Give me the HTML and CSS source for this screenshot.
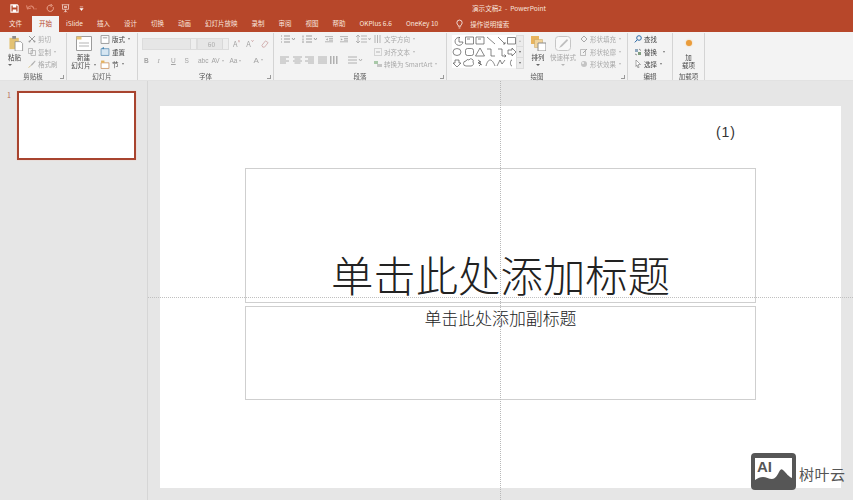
FILE: index.html
```html
<!DOCTYPE html>
<html lang="zh">
<head>
<meta charset="utf-8">
<title>演示文稿2 - PowerPoint</title>
<link rel="stylesheet" href="styles.css">
</head>
<body>
<div class="app">
  <header class="titlebar">
    <div class="qat">
      <svg class="q" viewBox="0 0 10 10"><path d="M1 1h7l1 1v7H1z" fill="none" stroke="#fff" stroke-width="1.2"/><path d="M3 1h4v3H3zM3 6h4v3H3z" fill="#fff"/></svg>
      <svg class="q dim" viewBox="0 0 14 10"><path d="M3 4c3-3 6-2 7 2M1.5 1.5l1 4 4-1" fill="none" stroke="#e08a72" stroke-width="1.2"/><path d="M11 5h2l-1 1.500z" fill="#e08a72"/></svg>
      <svg class="q dim2" viewBox="0 0 10 10"><path d="M8 3.500a3.500 3.500 0 1 1-2-2M5 0l2 1.500-2 2" fill="none" stroke="#eba893" stroke-width="1.100"/></svg>
      <svg class="q" viewBox="0 0 12 12"><path d="M1 1h10M2 1v6h8V1M6 7v4M4 11l2-2 2 2" fill="none" stroke="#f3d8d0" stroke-width="1"/><path d="M4 3h4v2H4z" fill="#f3d8d0"/></svg>
      <svg class="q tiny" viewBox="0 0 6 6"><path d="M1 1h4M1 3h4L3 5.500z" fill="#fff" stroke="#fff" stroke-width=".6"/></svg>
    </div>
    <div class="doc">演示文稿2&nbsp; -&nbsp; PowerPoint</div>
  </header>

  <nav class="tabs">
    <span class="tab first">文件</span>
    <span class="tab on">开始</span>
    <span class="tab">iSlide</span>
    <span class="tab">插入</span>
    <span class="tab">设计</span>
    <span class="tab">切换</span>
    <span class="tab">动画</span>
    <span class="tab">幻灯片放映</span>
    <span class="tab">录制</span>
    <span class="tab">审阅</span>
    <span class="tab">视图</span>
    <span class="tab">帮助</span>
    <span class="tab">OKPlus 6.6</span>
    <span class="tab">OneKey 10</span>
    <span class="search">
      <svg class="bulb" viewBox="0 0 8 11"><path d="M2.500 8V7C1.500 6 1 5.200 1 4a3 3 0 0 1 6 0c0 1.200-.5 2-1.500 3v1zM3 10h2" fill="none" stroke="#fff" stroke-width=".9"/></svg>
      操作说明搜索
    </span>
  </nav>

  <section class="ribbon">
    <div class="group g1">
      <div class="body">
        <div class="big w-paste">
          <svg class="bigicon" viewBox="0 0 16 16"><path d="M1 2h10v12H1z" fill="#e3c274"/><path d="M4 0h4v3H4z" fill="#8d8d8d"/><path d="M7 6h6l2 2v8H7z" fill="#fff" stroke="#8a8a8a" stroke-width=".8"/></svg>
          <span class="lbl">粘贴</span><span class="chev"></span>
        </div>
        <div class="col">
          <div class="row off"><svg class="si" viewBox="0 0 8 8"><path d="M1 1l5 5M7 1L2 6" stroke="#9a9a9a" fill="none"/><circle cx="1.500" cy="6.500" r="1" fill="#9a9a9a"/><circle cx="6.500" cy="6.500" r="1" fill="#9a9a9a"/></svg>剪切</div>
          <div class="row off"><svg class="si" viewBox="0 0 8 8"><path d="M.5.500h4v5h-4zM3 2.500h4.500v5H3z" fill="#f3f3f3" stroke="#a8a8a8" stroke-width=".7"/></svg>复制<span class="caret"></span></div>
          <div class="row off"><svg class="si" viewBox="0 0 8 8"><path d="M7 .5L3.500 4 2 6.500 4.500 5 7.500 1.500z" fill="#b0b0b0"/><path d="M.5 7.500l2-1.500" stroke="#d8c48c"/></svg>格式刷</div>
        </div>
      </div>
      <div class="glabel">剪贴板<i class="launch"></i></div>
    </div>

    <div class="group g2">
      <div class="body">
        <div class="big w-new">
          <svg class="bigicon" viewBox="0 0 16 15"><path d="M.5.500h15v14H.5z" fill="#fff" stroke="#9c9c9c"/><path d="M.5.500h5v3h-5z" fill="#e8c476"/><path d="M3 7h10M3 10h10" stroke="#b5b5b5"/></svg>
          <span class="lbl">新建</span><span class="lbl">幻灯片<span class="caret"></span></span>
        </div>
        <div class="col">
          <div class="row"><svg class="si" viewBox="0 0 8 8"><path d="M.5.500h7v7h-7z" fill="#fff" stroke="#888" stroke-width=".7"/><path d="M2 2h4v1H2z" fill="#aaa"/></svg>版式<span class="caret"></span></div>
          <div class="row"><svg class="si" viewBox="0 0 8 8"><path d="M.5 1.500h7v6h-7z" fill="#d6e6f2" stroke="#5d8fb5" stroke-width=".7"/><path d="M1 1l2-1v2z" fill="#3d7fae"/></svg>重置</div>
          <div class="row"><svg class="si" viewBox="0 0 8 8"><path d="M.5 2.500h7v5h-7z" fill="#fff" stroke="#c98f5c" stroke-width=".7"/><path d="M.5.500h3v2h-3z" fill="#e5b25c"/></svg>节<span class="caret"></span></div>
        </div>
      </div>
      <div class="glabel">幻灯片</div>
    </div>

    <div class="group g3">
      <div class="body stack">
        <div class="fontrow">
          <span class="fbox name"><b class="spin"></b></span>
          <span class="fbox size">60<b class="spin"></b></span>
          <span class="tool a1">A<sup>^</sup></span>
          <span class="tool a2">A<sup>ˇ</sup></span>
          <svg class="clr" viewBox="0 0 9 9"><path d="M1 6l4-5 3 2-4 5H2z" fill="none" stroke="#c79a9a" stroke-width=".8"/></svg>
        </div>
        <div class="fmtrow">
          <b>B</b><i>I</i><u>U</u><span>S</span><span class="abc">abc</span><span class="av">AV<em></em></span><span class="aa">Aa<em></em></span><span class="ac">A<em></em></span>
        </div>
      </div>
      <div class="glabel">字体<i class="launch"></i></div>
    </div>

    <div class="group g4">
      <div class="body">
        <div class="paras">
          <div class="prow">
            <svg class="pi w15" viewBox="0 0 15 8"><path d="M1 1h1M1 4h1M1 7h1M4 1h6M4 4h6M4 7h6M12 3l1.500 2L15 3" stroke="#9d9d9d" fill="none"/></svg>
            <svg class="pi w15" viewBox="0 0 15 8"><path d="M1 .5v2M1 3.500v2M1 6v2M4 1h6M4 4h6M4 7h6M12 3l1.500 2L15 3" stroke="#9d9d9d" fill="none"/></svg>
            <svg class="pi w11 gapl" viewBox="0 0 10 8"><path d="M0 1h10M5 3.500h5M5 5.500h5M0 7.500h10" stroke="#a5a5a5"/><path d="M3.500 3v3L1 4.500z" fill="#a5a5a5"/></svg>
            <svg class="pi w11" viewBox="0 0 10 8"><path d="M0 1h10M5 3.500h5M5 5.500h5M0 7.500h10" stroke="#a5a5a5"/><path d="M1 3v3l2.500-1.500z" fill="#a5a5a5"/></svg>
            <svg class="pi w15 gapl" viewBox="0 0 15 8"><path d="M2 0v8M0 2l2-2 2 2M0 6l2 2 2-2M5 1h6M5 4h6M5 7h6M12.500 3l1 2 1-2" stroke="#a5a5a5" fill="none" stroke-width=".8"/></svg>
          </div>
          <div class="prow low">
            <svg class="pi w10" viewBox="0 0 9 8"><path d="M0 1h9M0 3h6M0 5h9M0 7h6" stroke="#b0b0b0"/></svg>
            <svg class="pi w10" viewBox="0 0 9 8"><path d="M0 1h9M1.500 3h6M0 5h9M1.500 7h6" stroke="#b0b0b0"/></svg>
            <svg class="pi w10" viewBox="0 0 9 8"><path d="M0 1h9M3 3h6M0 5h9M3 7h6" stroke="#b0b0b0"/></svg>
            <svg class="pi w10" viewBox="0 0 9 8"><path d="M0 1h9M0 3h9M0 5h9M0 7h9" stroke="#b0b0b0"/></svg>
            <svg class="pi w10" viewBox="0 0 9 8"><path d="M0 0h1.500v8H0zM3 0h1.500v8H3zM6 0h1.500v8H6z" fill="#b0b0b0"/></svg>
            <svg class="pi w15 gapl2" viewBox="0 0 15 8"><path d="M0 1h9M0 4h9M0 7h9M11 3l1.500 2L14 3" stroke="#b0b0b0" fill="none"/></svg>
          </div>
        </div>
        <div class="col textcol">
          <div class="row off"><svg class="si" viewBox="0 0 8 8"><path d="M1 0v8M3.500 0v8M6 0v8" stroke="#b5b5b5"/></svg>文字方向<span class="caret"></span></div>
          <div class="row off"><svg class="si" viewBox="0 0 8 8"><path d="M.5.500h7v7h-7z" fill="none" stroke="#b5b5b5" stroke-dasharray="1 1"/><path d="M2 4h4" stroke="#b5b5b5"/></svg>对齐文本<span class="caret"></span></div>
          <div class="row off"><svg class="si" viewBox="0 0 8 8"><path d="M0 1h4v3H0z" fill="#a8c8a8"/><path d="M3 4h5v3H3z" fill="#c5c5c5"/></svg>转换为 SmartArt<span class="caret"></span></div>
        </div>
      </div>
      <div class="glabel">段落<i class="launch"></i></div>
    </div>

    <div class="group g5">
      <div class="body">
        <div class="gallery">
          <svg class="shapes" viewBox="0 0 64 33">
            <g fill="none" stroke="#555" stroke-width=".7">
              <path d="M8 2.500A4 4 0 1 0 11 7H7V2.500z"/><path d="M13.500 2h8v7h-8zM15 4h3"/><path d="M24 2h8v7h-8zM26 4h3"/>
              <path d="M35 2l8 7M46 2l7 7M51 9l2 0 0-2"/><path d="M55.500 2.500h8v6.500h-8z"/>
              <ellipse cx="5" cy="17" rx="4" ry="3.500"/><rect x="13.500" y="13.500" width="8" height="7" rx="2"/><path d="M28 13l4.500 8h-9z"/>
              <path d="M35 14h4v7h4"/><path d="M46 14h4v7h4M52.500 19.500l1.500 1.500-1.500 1"/><path d="M56 15h4v-2l4 4-4 4v-2h-4z"/>
              <path d="M3 25h4v3h2l-4 4-4-4h2z"/><path d="M14 26a2 2 0 0 1 3-1 2 2 0 0 1 4 2 2.500 2.500 0 0 1-2 4h-5a2.500 2.500 0 0 1 0-5z"/><path d="M26 25l3 2-2 1 3 2M28 26l-2 2 3 1-2 2"/>
              <path d="M34 31c2-8 6-8 9 0"/><path d="M45 31l3-6 2 4 3-4"/><path d="M60 25c-2 0-1 3-2 3 1 0 0 3 2 3"/>
            </g>
          </svg>
          <div class="scroll"><span class="up"></span><span class="dn"></span><span class="more"></span></div>
        </div>
        <div class="big w-arr">
          <svg class="bigicon" viewBox="0 0 15 15"><path d="M0 0h8v8H0z" fill="#e8b45e"/><path d="M3.500 3.500h8v8h-8z" fill="#f1d39a" stroke="#c4a25f" stroke-width=".5"/><path d="M7 7h8v8H7z" fill="#fff" stroke="#8c8c8c"/></svg>
          <span class="lbl">排列</span><span class="chev"></span>
        </div>
        <div class="big w-quick off">
          <svg class="bigicon" viewBox="0 0 16 15"><rect x=".5" y=".5" width="15" height="14" rx="3" fill="#f8f8f8" stroke="#c6c6c6"/><path d="M12 3L6 9l-2 3 3-1.500 6-6z" fill="#bdbdbd"/></svg>
          <span class="lbl">快速样式</span><span class="chev pale"></span>
        </div>
        <div class="col fillcol">
          <div class="row off"><svg class="si" viewBox="0 0 8 8"><path d="M1 4l3-3 3 3-3 3z" fill="none" stroke="#a8a8a8"/></svg>形状填充<span class="caret"></span></div>
          <div class="row off"><svg class="si" viewBox="0 0 8 8"><path d="M.5 1.500h5v6h-5z" fill="none" stroke="#a8a8a8" stroke-width=".7"/><path d="M3 5l4-4" stroke="#a8a8a8"/></svg>形状轮廓<span class="caret"></span></div>
          <div class="row off"><svg class="si" viewBox="0 0 8 8"><circle cx="4" cy="4" r="3" fill="#c4c4c4"/><circle cx="3" cy="3" r="1" fill="#f5f5f5"/></svg>形状效果<span class="caret"></span></div>
        </div>
      </div>
      <div class="glabel">绘图<i class="launch"></i></div>
    </div>

    <div class="group g6">
      <div class="body">
        <div class="col">
          <div class="row"><svg class="si" viewBox="0 0 8 8"><circle cx="5" cy="3" r="2.300" fill="none" stroke="#2c6aa6"/><path d="M3.200 4.800L.8 7.400" stroke="#2c6aa6"/></svg>查找</div>
          <div class="row"><svg class="si" viewBox="0 0 8 8"><path d="M1 1h3v3H1z" fill="#8fa8bd"/><path d="M4 4h3v3H4z" fill="#7f9d7f"/><path d="M5 1l2 1.500M1 6l2 1" stroke="#666" stroke-width=".7"/></svg>替换<span class="caret far"></span></div>
          <div class="row"><svg class="si" viewBox="0 0 8 8"><path d="M2 0l4.500 4.500H4.200L5 7.500 4 8 3 5 2 6.500z" fill="#fff" stroke="#777" stroke-width=".6"/></svg>选择<span class="caret"></span></div>
        </div>
      </div>
      <div class="glabel">编辑</div>
    </div>

    <div class="group g7">
      <div class="body">
        <div class="big w-add">
          <span class="dot"></span>
          <span class="lbl">加</span><span class="lbl">载项</span>
        </div>
      </div>
      <div class="glabel">加载项</div>
    </div>
  </section>

  <main class="workspace">
    <aside class="panel">
      <span class="num">1</span>
      <div class="thumb"></div>
    </aside>
    <div class="stage">
      <article class="slide">
        <div class="pageno">(1)</div>
        <div class="ph title">单击此处添加标题</div>
        <div class="ph subtitle">单击此处添加副标题</div>
      </article>
    </div>
    <div class="guide h"></div>
    <div class="guide v"></div>
  </main>

  <div class="mark">
    <svg class="markicon" viewBox="0 0 45 37">
      <rect width="45" height="37" rx="4" fill="#565656"/>
      <rect x="4" y="5" width="37" height="28" fill="#fff"/>
      <path d="M4 33V27c3-2 5-3 8-3s6 2 9 2 5-3 7-7 3-3 5-1 5 6 8 7v8z" fill="#565656"/>
    </svg>
    <span class="ai">AI</span>
    <span class="marktext">树叶云</span>
  </div>
</div>
</body>
</html>
```

FILE: styles.css
```css
* { box-sizing: border-box; }
html, body { margin: 0; padding: 0; }
body {
  width: 853px; height: 500px; overflow: hidden;
  font-family: "Noto Sans CJK SC", "Noto Sans", sans-serif;
  color: #444; background: #e6e6e6;
}
.app { position: relative; width: 853px; height: 500px; display: flex; flex-direction: column; overflow: hidden; }

/* title bar */
.titlebar { height: 16px; background: #b7472a; display: flex; align-items: center; padding-left: 10px; flex: none; }
.qat { display: flex; align-items: center; width: 462px; gap: 6px; }
.q { width: 9px; height: 9px; display: block; }
.q.dim { width: 13px; }
.q.dim2 { margin-left: 2px; }
.q.tiny { width: 5px; height: 5px; margin-left: 3px; }
.doc { font-size: 6.6px; line-height: 12px; color: #f7e3dc; white-space: nowrap; }

/* tabs */
.tabs { height: 16px; background: #b7472a; display: flex; padding-left: 2px; flex: none; font-size: 6.5px; color: #f9e6df; line-height: 15px; white-space: nowrap; }
.tab { padding: 0 7px; }
.tab.first { margin-right: 3px; }
.tab.on { background: #f3f3f3; color: #b7472a; }
.search { display: flex; align-items: center; margin-left: 11px; gap: 7px; }
.bulb { width: 7px; height: 10px; }

/* ribbon */
.ribbon { height: 49px; background: #f3f3f3; display: flex; flex: none; font-size: 6.5px; filter: blur(.35px); border-bottom: 1px solid #e2e2e2; }
.group { display: flex; flex-direction: column; border-right: 1px solid #d4d4d4; margin-top: 1px; position: relative; flex: none; }
.g1 { width: 67px; } .g2 { width: 71px; } .g3 { width: 136px; } .g4 { width: 173px; }
.g5 { width: 181px; } .g6 { width: 45px; } .g7 { width: 32px; }
.body { flex: 1; display: flex; min-height: 0; }
.glabel { height: 9px; flex: none; line-height: 10px; text-align: center; white-space: nowrap; position: relative; color: #555; }
.launch { position: absolute; right: 2px; bottom: 1px; width: 4px; height: 4px; border-right: 1px solid #999; border-bottom: 1px solid #999; }

.big { display: flex; flex-direction: column; align-items: center; padding-top: 3px; white-space: nowrap; }
.bigicon { width: 16px; height: 15px; display: block; margin-bottom: 2px; flex: none; }
.lbl { line-height: 8px; height: 8px; display: flex; align-items: center; }
.off { color: #a9a9a9; }
.chev { width: 0; height: 0; margin-top: 3px; border: 2px solid transparent; border-top-color: #666; border-bottom: 0; }
.chev.pale { border-top-color: #b5b5b5; }
.caret { display: inline-block; width: 0; height: 0; margin-left: 3px; border: 1.500px solid transparent; border-top: 2px solid #777; border-bottom: 0; }
.off .caret { border-top-color: #b8b8b8; }
.caret.far { margin-left: 6px; }

.col { display: flex; flex-direction: column; }
.row { height: 12.500px; display: flex; align-items: center; white-space: nowrap; }
.si { width: 8px; height: 8px; margin-right: 2px; flex: none; }

.g1 .big { width: 28px; padding-left: 3px; }
.w-paste { align-items: flex-start !important; padding-left: 8px !important; }
.w-new { width: 33px; }
.g2 .si { width: 10px; height: 9px; }

/* font group */
.stack { flex-direction: column; padding: 4px 0 0 4px; }
.fontrow { display: flex; align-items: center; height: 13px; }
.fbox { display: flex; align-items: center; justify-content: flex-end; height: 12px; background: #e6e6e6; border: 1px solid #dcdcdc; color: #aaa; font-size: 6.500px; }
.fbox.name { width: 55px; }
.fbox.size { width: 32px; gap: 7px; }
.spin { width: 6px; height: 10px; background: #eee; border-left: 1px solid #d8d8d8; }
.tool { font-size: 7.500px; color: #a5a5a5; line-height: 12px; display: flex; }
.tool sup { font-size: 5px; line-height: 8px; color: #c08a8a; }
.a1 { margin-left: 4px; } .a2 { margin-left: 6px; }
.clr { width: 8px; height: 8px; margin-left: 7px; }
.fmtrow { display: flex; align-items: center; height: 12px; margin-top: 4px; padding-left: 2px; color: #a3a3a3; font-family: "Liberation Sans", sans-serif; font-size: 6.500px; }
.fmtrow > * { width: 13.500px; font-style: normal; font-weight: 400; }
.fmtrow b { font-weight: 700; }
.fmtrow i { font-family: "Liberation Serif", serif; font-style: italic; }
.fmtrow .av { width: 18px; }
.fmtrow .aa { width: 24px; }
.fmtrow .ac { font-size: 8px; }
.fmtrow em { display: inline-block; margin-left: 2px; vertical-align: middle; width: 0; height: 0; border: 1.500px solid transparent; border-top: 2px solid #b8b8b8; border-bottom: 0; }

/* paragraph group */
.paras { display: flex; flex-direction: column; padding: 0 0 0 6px; width: 100px; }
.prow { display: flex; align-items: center; height: 12px; gap: 7px; }
.prow.low { margin-top: 9px; gap: 3.500px; }
.pi { height: 8px; display: block; flex: none; }
.w15 { width: 15px; } .w11 { width: 8px; } .w10 { width: 9px; }
.gapl { margin-left: 1px; } .gapl2 { margin-left: 5px; }

/* drawing group */
.gallery { margin: 2px 0 0 5px; display: flex; height: 34px; width: 73px; flex: none; }
.shapes { width: 64px; height: 33px; background: #fff; display: block; flex: none; }
.scroll { width: 8px; display: flex; flex-direction: column; background: #ececec; border: 1px solid #dcdcdc; }
.scroll span { flex: 1; display: flex; align-items: center; justify-content: center; }
.scroll span + span { border-top: 1px solid #dcdcdc; }
.scroll span::after { content: ""; width: 0; height: 0; border: 1.500px solid transparent; border-top: 2px solid #666; border-bottom: 0; }
.scroll .up::after { border-top: 0; border-bottom: 2px solid #bbb; }
.w-arr { width: 24px; margin-left: 1px; }
.w-arr .bigicon { width: 15px; }
.w-quick { width: 26px; }
.fillcol { padding-left: 4px; }

/* edit + add-in */
.g6 .col { padding-left: 6px; }
.w-add { width: 31px; }
.dot { width: 6px; height: 6px; border-radius: 50%; background: #ea9c3b; margin: 4px 0 7px; box-shadow: 0 0 2px #f3c486; }

/* workspace */
.workspace { position: relative; flex: 1; display: flex; min-height: 0; background: #e6e6e6; }
.panel { width: 148px; flex: none; border-right: 1px solid #d6d6d6; display: flex; align-items: flex-start; padding: 10px 0 0 7px; }
.num { font-size: 7px; line-height: 8px; width: 10px; color: #b56a55; }
.thumb { width: 119px; height: 69px; background: #fff; border: 2px solid #a8442f; box-shadow: 0 0 1px #f0b8a8; }
.stage { flex: 1; padding: 25px 12px 12px; }
.slide { height: 382px; background: #fff; padding: 0 85px; display: flex; flex-direction: column; }
.pageno { height: 62px; padding: 16px 20px 0 0; text-align: right; font-size: 14px; line-height: 20px; letter-spacing: 1px; color: #333; font-family: "Liberation Sans", "Noto Sans CJK SC", sans-serif; }
.ph { border: 1px solid #cfcfcf; text-align: center; color: #222; white-space: nowrap; }
.title { height: 135px; font-size: 42.400px; line-height: 56px; display: flex; align-items: flex-end; justify-content: center; font-weight: 300; }
.subtitle { height: 94px; margin-top: 3px; font-size: 16.900px; line-height: 22px; font-weight: 300; }

.guide { position: absolute; pointer-events: none; }
.guide.h { left: 148px; right: 0; top: 216px; border-top: 1px dotted #c0c0c0; }
.guide.v { left: 500px; top: 0; bottom: 0; border-left: 1px dotted #b8b8b8; }

/* watermark */
.mark { position: absolute; left: 751px; top: 453px; display: flex; align-items: center; gap: 3px; }
.markicon { width: 45px; height: 37px; display: block; }
.ai { position: absolute; left: 6px; top: 6px; font: 700 15px/16px "Liberation Sans", sans-serif; color: #565656; }
.marktext { font-size: 15px; line-height: 20px; color: #555; letter-spacing: .5px; margin-top: 4px; }
```
